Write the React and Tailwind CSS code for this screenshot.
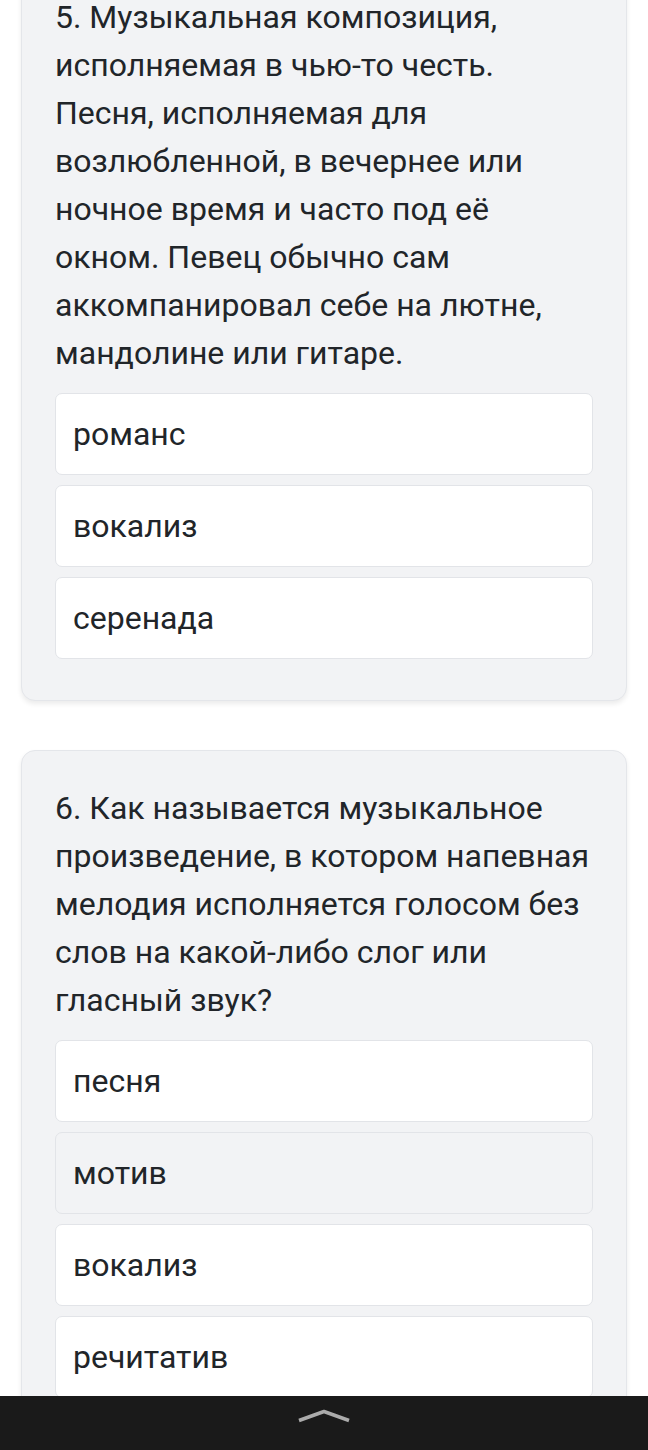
const questions = [
  {
    id: 5,
    text: "5. Музыкальная композиция, исполняемая в чью-то честь. Песня, исполняемая для возлюбленной, в вечернее или ночное время и часто под её окном. Певец обычно сам аккомпанировал себе на лютне, мандолине или гитаре.",
    options: ["романс", "вокализ", "серенада"],
    active: null,
  },
  {
    id: 6,
    text: "6. Как называется музыкальное произведение, в котором напевная мелодия исполняется голосом без слов на какой-либо слог или гласный звук?",
    options: ["песня", "мотив", "вокализ", "речитатив"],
    active: 1,
  },
];

const QuestionCard = ({ question }) => {
  return (
    <div className="rounded-[14px] border border-[#e4e6ea] bg-[#f2f3f5] px-[33px] pt-[33px] pb-[41px] shadow-[0_3px_5px_rgba(0,0,0,0.08)]">
      <p className="text-[32px] leading-[48px] text-[#212529]">{question.text}</p>
      <div className="mt-4 flex flex-col gap-[10px]">
        {question.options.map((opt, i) => (
          <button
            key={opt}
            type="button"
            className={
              "flex h-[82px] items-center rounded-[7px] border border-[#e2e4e8] px-[17px] text-left text-[32px] text-[#212529] " +
              (i === question.active ? "bg-[#f2f3f5]" : "bg-white")
            }
          >
            {opt}
          </button>
        ))}
      </div>
    </div>
  );
};

export default function App() {
  return (
    <div
      className="relative h-[1450px] w-[648px] overflow-hidden bg-white"
      style={{ fontFamily: "Roboto, 'Noto Sans', sans-serif" }}
    >
      <div className="-mt-[41px] flex flex-col gap-[49px] px-[21px]">
        {questions.map((q) => (
          <QuestionCard key={q.id} question={q} />
        ))}
      </div>

      {/* bottom navigation bar */}
      <div className="absolute bottom-0 left-0 flex h-[54px] w-full items-start justify-center bg-[#1a1a1a]">
        <svg width="56" height="18" viewBox="0 0 56 18" className="mt-[12px]">
          <path d="M3 12.5 L28 3.5 L53 12.5" fill="none" stroke="#ababab" strokeWidth="3.5" strokeLinejoin="round" />
        </svg>
      </div>
    </div>
  );
}
